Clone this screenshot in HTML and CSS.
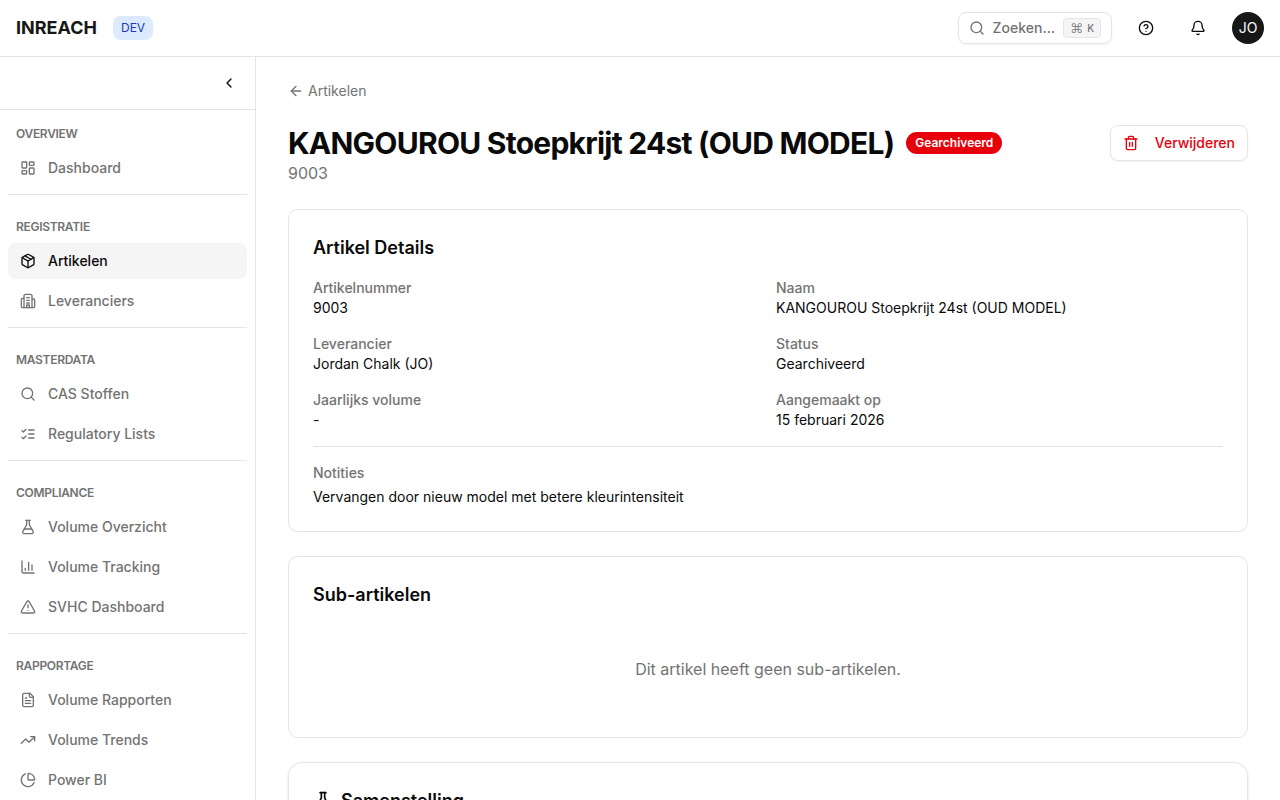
FILE: index.html
```
<!DOCTYPE html>
<html lang="nl">
  <head>
    <meta charset="UTF-8" />
    <meta name="viewport" content="width=device-width, initial-scale=1" />
    <title>KANGOUROU Stoepkrijt 24st (OUD MODEL)</title>
    <link rel="stylesheet" href="styles.css">
  </head>

  <body>
    <header class="topbar">
      <div class="brand">
        <span class="brand-name">INREACH</span>
        <span class="env-badge">DEV</span>
      </div>
      <div class="topbar-actions">
        <button class="search-button" type="button">
          <svg class="icon" viewBox="0 0 24 24"><circle cx="11" cy="11" r="8" /><path d="m21 21-4.3-4.3" /></svg>
          <span>Zoeken...</span>
          <kbd><span class="cmd">⌘</span>K</kbd>
        </button>
        <button class="icon-button" type="button" aria-label="Help">
          <svg class="icon" viewBox="0 0 24 24">
            <circle cx="12" cy="12" r="10" />
            <path d="M9.09 9a3 3 0 0 1 5.83 1c0 2-3 3-3 3" />
            <path d="M12 17h.01" />
          </svg>
        </button>
        <button class="icon-button" type="button" aria-label="Meldingen">
          <svg class="icon" viewBox="0 0 24 24">
            <path d="M10.268 21a2 2 0 0 0 3.464 0" />
            <path d="M3.262 15.326A1 1 0 0 0 4 17h16a1 1 0 0 0 .74-1.673C19.41 13.956 18 12.499 18 8A6 6 0 0 0 6 8c0 4.499-1.411 5.956-2.738 7.326" />
          </svg>
        </button>
        <button class="avatar" type="button">JO</button>
      </div>
    </header>

    <div class="layout">
      <aside class="sidebar">
        <div class="sidebar-header">
          <button class="icon-button" type="button" aria-label="Menu inklappen">
            <svg class="icon" viewBox="0 0 24 24"><path d="m15 18-6-6 6-6" /></svg>
          </button>
        </div>
        <nav>
          <section class="nav-section">
            <h2>OVERVIEW</h2>
            <a class="nav-link" href="#">
              <svg class="icon" viewBox="0 0 24 24">
                <rect width="7" height="9" x="3" y="3" rx="1" />
                <rect width="7" height="5" x="14" y="3" rx="1" />
                <rect width="7" height="9" x="14" y="12" rx="1" />
                <rect width="7" height="5" x="3" y="16" rx="1" />
              </svg>
              Dashboard
            </a>
          </section>
          <section class="nav-section">
            <h2>REGISTRATIE</h2>
            <a class="nav-link active" href="#" aria-current="page">
              <svg class="icon" viewBox="0 0 24 24">
                <path d="M11 21.73a2 2 0 0 0 2 0l7-4A2 2 0 0 0 21 16V8a2 2 0 0 0-1-1.73l-7-4a2 2 0 0 0-2 0l-7 4A2 2 0 0 0 3 8v8a2 2 0 0 0 1 1.73z" />
                <path d="M12 22V12" />
                <path d="M3.29 7 12 12l8.71-5" />
                <path d="m7.5 4.27 9 5.15" />
              </svg>
              Artikelen
            </a>
            <a class="nav-link" href="#">
              <svg class="icon" viewBox="0 0 24 24">
                <path d="M6 22V4a2 2 0 0 1 2-2h8a2 2 0 0 1 2 2v18Z" />
                <path d="M6 8H4a2 2 0 0 0-2 2v10a2 2 0 0 0 2 2h2" />
                <path d="M18 9h2a2 2 0 0 1 2 2v9a2 2 0 0 1-2 2h-2" />
                <path d="M10 7h4M10 11h4M10 15h4M10 22v-4h4v4" />
              </svg>
              Leveranciers
            </a>
          </section>
          <section class="nav-section">
            <h2>MASTERDATA</h2>
            <a class="nav-link" href="#">
              <svg class="icon" viewBox="0 0 24 24"><circle cx="11" cy="11" r="8" /><path d="m21 21-4.3-4.3" /></svg>
              CAS Stoffen
            </a>
            <a class="nav-link" href="#">
              <svg class="icon" viewBox="0 0 24 24">
                <path d="m3 17 2 2 4-4" />
                <path d="m3 7 2 2 4-4" />
                <path d="M13 6h8M13 12h8M13 18h8" />
              </svg>
              Regulatory Lists
            </a>
          </section>
          <section class="nav-section">
            <h2>COMPLIANCE</h2>
            <a class="nav-link" href="#">
              <svg class="icon" viewBox="0 0 24 24">
                <path d="M14 2v6a2 2 0 0 0 .245.96l5.51 10.08A2 2 0 0 1 18 22H6a2 2 0 0 1-1.755-2.96l5.51-10.08A2 2 0 0 0 10 8V2" />
                <path d="M6.453 15h11.094" />
                <path d="M8.5 2h7" />
              </svg>
              Volume Overzicht
            </a>
            <a class="nav-link" href="#">
              <svg class="icon" viewBox="0 0 24 24">
                <path d="M3 3v16a2 2 0 0 0 2 2h16" />
                <path d="M18 17V9M13 17V5M8 17v-3" />
              </svg>
              Volume Tracking
            </a>
            <a class="nav-link" href="#">
              <svg class="icon" viewBox="0 0 24 24">
                <path d="m21.73 18-8-14a2 2 0 0 0-3.48 0l-8 14A2 2 0 0 0 4 21h16a2 2 0 0 0 1.73-3" />
                <path d="M12 9v4M12 17h.01" />
              </svg>
              SVHC Dashboard
            </a>
          </section>
          <section class="nav-section">
            <h2>RAPPORTAGE</h2>
            <a class="nav-link" href="#">
              <svg class="icon" viewBox="0 0 24 24">
                <path d="M15 2H6a2 2 0 0 0-2 2v16a2 2 0 0 0 2 2h12a2 2 0 0 0 2-2V7Z" />
                <path d="M14 2v4a2 2 0 0 0 2 2h4" />
                <path d="M10 9H8M16 13H8M16 17H8" />
              </svg>
              Volume Rapporten
            </a>
            <a class="nav-link" href="#">
              <svg class="icon" viewBox="0 0 24 24">
                <path d="M16 7h6v6" />
                <path d="m22 7-8.5 8.5-5-5L2 17" />
              </svg>
              Volume Trends
            </a>
            <a class="nav-link" href="#">
              <svg class="icon" viewBox="0 0 24 24">
                <path d="M21 12c.552 0 1.005-.449.95-.998a10 10 0 0 0-8.953-8.951c-.55-.055-.998.398-.998.95v8a1 1 0 0 0 1 1z" />
                <path d="M21.21 15.89A10 10 0 1 1 8 2.83" />
              </svg>
              Power BI
            </a>
          </section>
        </nav>
      </aside>

      <main class="content">
        <a class="back-link" href="#">
          <svg class="icon" viewBox="0 0 24 24"><path d="m12 19-7-7 7-7" /><path d="M19 12H5" /></svg>
          Artikelen
        </a>

        <div class="page-header">
          <div>
            <div class="page-title">
              <h1>KANGOUROU Stoepkrijt 24st (OUD MODEL)</h1>
              <span class="status-badge">Gearchiveerd</span>
            </div>
            <p class="article-number">9003</p>
          </div>
          <button class="delete-button" type="button">
            <svg class="icon" viewBox="0 0 24 24">
              <path d="M3 6h18" />
              <path d="M19 6v14a2 2 0 0 1-2 2H7a2 2 0 0 1-2-2V6" />
              <path d="M8 6V4a2 2 0 0 1 2-2h4a2 2 0 0 1 2 2v2" />
              <path d="M10 11v6M14 11v6" />
            </svg>
            Verwijderen
          </button>
        </div>

        <section class="card">
          <h2>Artikel Details</h2>
          <dl class="details">
            <div>
              <dt>Artikelnummer</dt>
              <dd>9003</dd>
            </div>
            <div>
              <dt>Naam</dt>
              <dd>KANGOUROU Stoepkrijt 24st (OUD MODEL)</dd>
            </div>
            <div>
              <dt>Leverancier</dt>
              <dd>Jordan Chalk (JO)</dd>
            </div>
            <div>
              <dt>Status</dt>
              <dd>Gearchiveerd</dd>
            </div>
            <div>
              <dt>Jaarlijks volume</dt>
              <dd>-</dd>
            </div>
            <div>
              <dt>Aangemaakt op</dt>
              <dd>15 februari 2026</dd>
            </div>
          </dl>
          <div class="notes">
            <h3>Notities</h3>
            <p>Vervangen door nieuw model met betere kleurintensiteit</p>
          </div>
        </section>

        <section class="card">
          <h2>Sub-artikelen</h2>
          <p class="empty">Dit artikel heeft geen sub-artikelen.</p>
        </section>

        <section class="card card-raised">
          <h2>
            <svg class="icon icon-lg" viewBox="0 0 24 24">
              <path d="M14 2v6a2 2 0 0 0 .245.96l5.51 10.08A2 2 0 0 1 18 22H6a2 2 0 0 1-1.755-2.96l5.51-10.08A2 2 0 0 0 10 8V2" />
              <path d="M6.453 15h11.094" />
              <path d="M8.5 2h7" />
            </svg>
            Samenstelling
          </h2>
        </section>
      </main>
    </div>
  </body>
</html>
```
FILE: styles.css
```
* {
  box-sizing: border-box;
}

body {
  display: flex;
  flex-direction: column;
  height: 100vh;
  margin: 0;
  overflow: hidden;
  background: #fff;
  color: #0a0a0a;
  font-family: Inter, 'Liberation Sans', sans-serif;
  font-size: 14px;
  line-height: 20px;
}

h1,
h2,
h3,
p,
dl,
dd {
  margin: 0;
}

a {
  color: inherit;
  text-decoration: none;
}

button {
  padding: 0;
  border: 0;
  background: none;
  color: inherit;
  font: inherit;
  cursor: pointer;
}

.icon {
  flex-shrink: 0;
  width: 16px;
  height: 16px;
  fill: none;
  stroke: currentColor;
  stroke-width: 2;
  stroke-linecap: round;
  stroke-linejoin: round;
}
.icon-lg {
  width: 20px;
  height: 20px;
}

.topbar {
  display: flex;
  flex-shrink: 0;
  align-items: center;
  justify-content: space-between;
  padding: 12px 16px;
  border-bottom: 1px solid #e5e5e5;
}
.brand,
.topbar-actions {
  display: flex;
  align-items: center;
  gap: 16px;
}
.topbar-actions {
  height: 32px;
}
.page-title h1,
.nav-section h2 {
  letter-spacing: -0.025em;
}
.brand-name {
  color: #171717;
  font-size: 18px;
  font-weight: 700;
  line-height: 28px;
}
.env-badge {
  padding: 4px 8px;
  border-radius: 8px;
  background: #dbeafe;
  color: #193cb8;
  font-size: 12px;
  font-weight: 400;
  line-height: 16px;
}
.search-button {
  display: flex;
  align-items: center;
  gap: 8px;
  height: 32px;
  padding: 0 10px;
  border: 1px solid #e5e5e5;
  border-radius: 8px;
  box-shadow: 0 1px 2px rgba(0, 0, 0, 0.05);
  color: #737373;
  font-weight: 500;
}
.search-button kbd {
  display: flex;
  align-items: center;
  gap: 4px;
  height: 20px;
  padding: 0 6px;
  border: 1px solid #e5e5e5;
  border-radius: 4px;
  background: #f5f5f5;
  font-family: inherit;
  font-size: 10px;
  font-weight: 500;
}
.cmd {
  font-size: 13px;
  font-weight: 300;
}
.icon-button {
  display: flex;
  align-items: center;
  justify-content: center;
  width: 36px;
  height: 36px;
}
.avatar {
  width: 32px;
  height: 32px;
  border-radius: 50%;
  background: #171717;
  color: #fafafa;
  font-weight: 400;
}

.layout {
  display: flex;
  flex: 1;
  min-height: 0;
}

.sidebar {
  flex: 0 0 256px;
  overflow-y: auto;
  border-right: 1px solid #e5e5e5;
  scrollbar-width: none;
}
.sidebar-header {
  display: flex;
  justify-content: flex-end;
  padding: 8px;
  border-bottom: 1px solid #e5e5e5;
}
.sidebar nav {
  display: flex;
  flex-direction: column;
  gap: 8px;
  padding: 0 8px;
}
.nav-section {
  display: flex;
  flex-direction: column;
  gap: 4px;
  padding: 8px 0;
  border-bottom: 1px solid #e5e5e5;
}
.nav-section:last-child {
  border-bottom: 0;
}
.nav-section h2 {
  padding: 8px 8px 4px;
  color: #737373;
  font-size: 12px;
  font-weight: 600;
  line-height: 16px;
}
.nav-link {
  display: flex;
  align-items: center;
  gap: 12px;
  padding: 8px 12px;
  border-radius: 8px;
  color: #737373;
  font-weight: 500;
}
.nav-link.active {
  background: #f5f5f5;
  color: #0a0a0a;
}

.content {
  display: flex;
  flex: 1;
  flex-direction: column;
  gap: 24px;
  min-width: 0;
  padding: 24px 32px;
  overflow-y: auto;
  scrollbar-width: none;
}
.back-link {
  display: flex;
  align-items: center;
  align-self: flex-start;
  gap: 4px;
  color: #737373;
}
.page-header {
  display: flex;
  align-items: flex-start;
  justify-content: space-between;
}
.page-title {
  display: flex;
  align-items: center;
  gap: 12px;
}
.page-title h1 {
  font-size: 30px;
  font-weight: 700;
  line-height: 36px;
}
.status-badge {
  padding: 3px 9px;
  border-radius: 11px;
  background: #e7000b;
  color: #fff;
  font-size: 12px;
  font-weight: 600;
  line-height: 16px;
}
.article-number {
  color: #737373;
  font-size: 16px;
  line-height: 24px;
}
.delete-button {
  display: flex;
  align-items: center;
  gap: 16px;
  height: 36px;
  padding: 0 12px;
  border: 1px solid #e5e5e5;
  border-radius: 8px;
  box-shadow: 0 1px 2px rgba(0, 0, 0, 0.05);
  color: #e7000b;
  font-weight: 500;
}

.card {
  flex-shrink: 0;
  padding: 24px;
  border: 1px solid #e5e5e5;
  border-radius: 10px;
}
.card-raised {
  border-radius: 14px;
  box-shadow: 0 1px 3px rgba(0, 0, 0, 0.1);
}
.card h2 {
  display: flex;
  align-items: center;
  gap: 8px;
  margin-bottom: 16px;
  font-size: 18px;
  font-weight: 600;
  line-height: 28px;
}
.details {
  display: grid;
  grid-template-columns: 1fr 1fr;
  gap: 16px;
}
.details dt,
.notes h3 {
  color: #737373;
  font-size: 14px;
  font-weight: 500;
}
.notes {
  margin-top: 16px;
  padding-top: 16px;
  border-top: 1px solid #e5e5e5;
}
.notes p {
  margin-top: 4px;
}
.empty {
  padding: 32px 0;
  color: #737373;
  font-size: 16px;
  line-height: 24px;
  text-align: center;
}
```
